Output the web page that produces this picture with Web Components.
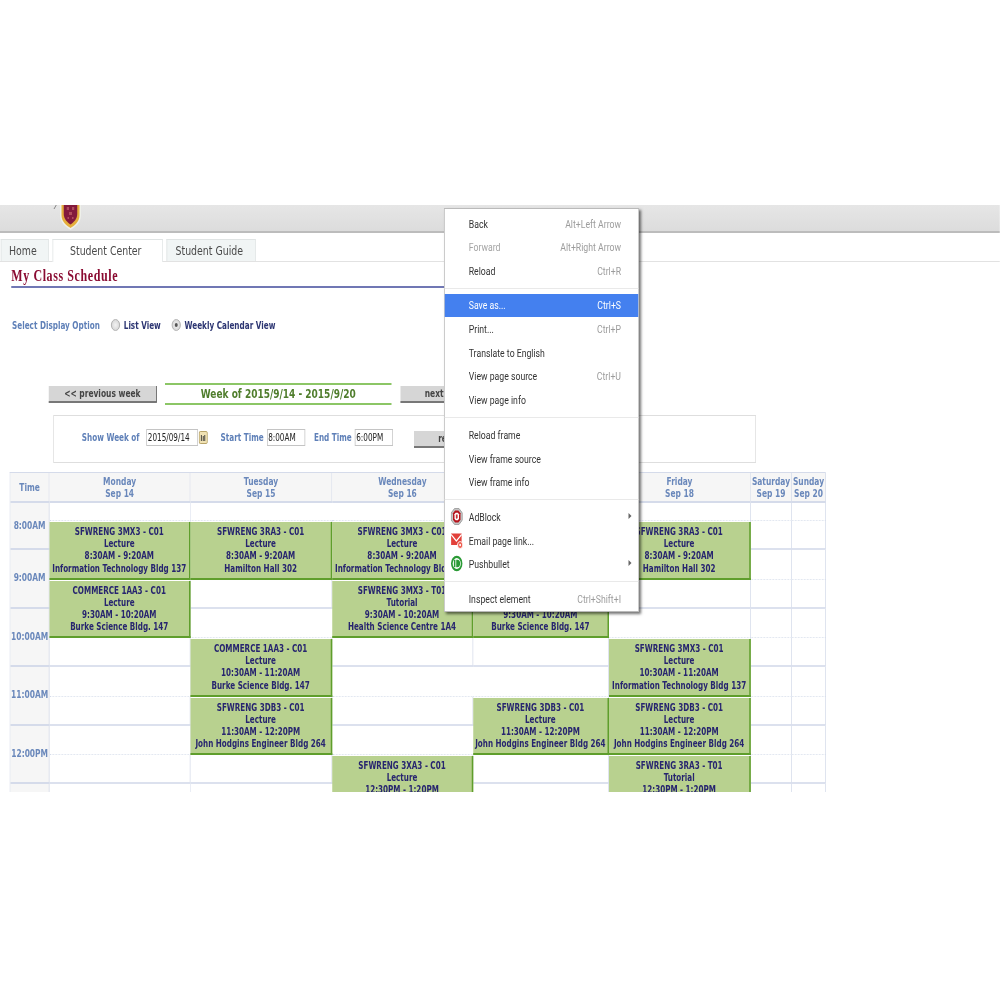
<!DOCTYPE html>
<html lang="en">
<head>
<meta charset="utf-8">
<title>My Class Schedule</title>
<style>
  html, body { margin: 0; background: #fff; }
  body { padding-top: 205px; font-family: "DejaVu Sans", Verdana, sans-serif; }
</style>
</head>
<body>

<class-portal>
  <portal-banner></portal-banner>
  <portal-tabs></portal-tabs>
  <schedule-heading>My Class Schedule</schedule-heading>
  <view-options></view-options>
  <week-nav></week-nav>
  <week-filter></week-filter>
  <schedule-grid>
    <schedule-event day="1" row="3" course="SFWRENG 3MX3 - C01" kind="Lecture" time="8:30AM - 9:20AM" place="Information Technology Bldg 137"></schedule-event>
    <schedule-event day="2" row="3" course="SFWRENG 3RA3 - C01" kind="Lecture" time="8:30AM - 9:20AM" place="Hamilton Hall 302"></schedule-event>
    <schedule-event day="3" row="3" course="SFWRENG 3MX3 - C01" kind="Lecture" time="8:30AM - 9:20AM" place="Information Technology Bldg 137"></schedule-event>
    <schedule-event day="5" row="3" course="SFWRENG 3RA3 - C01" kind="Lecture" time="8:30AM - 9:20AM" place="Hamilton Hall 302"></schedule-event>
    <schedule-event day="1" row="5" course="COMMERCE 1AA3 - C01" kind="Lecture" time="9:30AM - 10:20AM" place="Burke Science Bldg. 147"></schedule-event>
    <schedule-event day="3" row="5" course="SFWRENG 3MX3 - T01" kind="Tutorial" time="9:30AM - 10:20AM" place="Health Science Centre 1A4"></schedule-event>
    <schedule-event day="4" row="5" course="&#160;" kind="&#160;" time="9:30AM - 10:20AM" place="Burke Science Bldg. 147"></schedule-event>
    <schedule-event day="2" row="7" course="COMMERCE 1AA3 - C01" kind="Lecture" time="10:30AM - 11:20AM" place="Burke Science Bldg. 147"></schedule-event>
    <schedule-event day="5" row="7" course="SFWRENG 3MX3 - C01" kind="Lecture" time="10:30AM - 11:20AM" place="Information Technology Bldg 137"></schedule-event>
    <schedule-event day="2" row="9" course="SFWRENG 3DB3 - C01" kind="Lecture" time="11:30AM - 12:20PM" place="John Hodgins Engineer Bldg 264"></schedule-event>
    <schedule-event day="4" row="9" course="SFWRENG 3DB3 - C01" kind="Lecture" time="11:30AM - 12:20PM" place="John Hodgins Engineer Bldg 264"></schedule-event>
    <schedule-event day="5" row="9" course="SFWRENG 3DB3 - C01" kind="Lecture" time="11:30AM - 12:20PM" place="John Hodgins Engineer Bldg 264"></schedule-event>
    <schedule-event day="3" row="11" course="SFWRENG 3XA3 - C01" kind="Lecture" time="12:30PM - 1:20PM"></schedule-event>
    <schedule-event day="5" row="11" course="SFWRENG 3RA3 - T01" kind="Tutorial" time="12:30PM - 1:20PM"></schedule-event>
  </schedule-grid>
  <context-menu>
    <menu-item>Back<span slot="key">Alt+Left Arrow</span></menu-item>
    <menu-item disabled>Forward<span slot="key">Alt+Right Arrow</span></menu-item>
    <menu-item>Reload<span slot="key">Ctrl+R</span></menu-item>
    <menu-line style="height:10.800px"></menu-line>
    <menu-item active>Save as...<span slot="key">Ctrl+S</span></menu-item>
    <menu-item>Print...<span slot="key">Ctrl+P</span></menu-item>
    <menu-item>Translate to English</menu-item>
    <menu-item>View page source<span slot="key">Ctrl+U</span></menu-item>
    <menu-item>View page info</menu-item>
    <menu-line style="height:11.600px"></menu-line>
    <menu-item>Reload frame</menu-item>
    <menu-item>View frame source</menu-item>
    <menu-item>View frame info</menu-item>
    <menu-line></menu-line>
    <menu-item arrow>AdBlock
      <svg slot="icon" viewBox="0 0 16 17" width="16" height="17">
        <path d="M5 .5h6L15.500 5v7L11 16.500H5L.5 12V5z" fill="#c4c4c4" stroke="#9a9a9a"/>
        <path d="M5.800 2.500h4.400L13 5.300v6.400L10.200 14.500H5.800L3 11.700V5.300z" fill="#b5121b"/>
        <path d="M6.500 4.800h3L11 6.300v4.400L9.500 12.200h-3L5 10.700V6.300z" fill="#fff"/>
        <path d="M6.800 6.500h2.400v3.500L8 11 6.800 10z" fill="#c8343a"/>
      </svg></menu-item>
    <menu-item>Email page link...
      <svg slot="icon" viewBox="0 0 16 17" width="16" height="17">
        <path d="M.5 1.500h14v11.500H.5z" fill="#e2403a"/>
        <path d="M.5 2.500 7.500 9l7-6.500" fill="none" stroke="#fff" stroke-width="1.500"/>
        <circle cx="12.500" cy="13" r="3.500" fill="#ef5a4c" stroke="#fff"/>
        <circle cx="12.500" cy="13" r="1.200" fill="#fff"/>
      </svg></menu-item>
    <menu-item arrow>Pushbullet
      <svg slot="icon" viewBox="0 0 16 17" width="16" height="17">
        <circle cx="8" cy="8.500" r="7.700" fill="#2a9a35"/>
        <circle cx="8" cy="8.500" r="5.400" fill="#fff"/>
        <rect x="4.200" y="4.800" width="2" height="7.400" fill="#2a9a35"/>
        <path d="M7.300 4.800h1.500a3.700 3.700 0 0 1 0 7.400H7.300z" fill="#2a9a35"/>
      </svg></menu-item>
    <menu-line></menu-line>
    <menu-item>Inspect element<span slot="key">Ctrl+Shift+I</span></menu-item>
  </context-menu>
</class-portal>

<script>
// the reference is a screenshot squeezed sideways to 3/4, so the sheet is laid out
// at its own width and scaled once here (all x values below are reference x * 4/3)
class ClassPortal extends HTMLElement {
  constructor() {
    super();
    this.attachShadow({ mode: 'open' });
    this.shadowRoot.innerHTML = `
      <style>
        :host {
          display: block;
          width: 1000px;
          height: 587px;
          overflow: hidden;
          background: #fff;
          font-family: "DejaVu Sans", Verdana, sans-serif;
        }
        .sheet {
          position: relative;
          width: 1333px;
          height: 587px;
          transform: scaleX(.75);
          transform-origin: 0 0;
          filter: blur(.5px);
        }
      </style>
      <div class="sheet"><slot></slot></div>`;
  }
}
customElements.define('class-portal', ClassPortal);

class PortalBanner extends HTMLElement {
  constructor() {
    super();
    this.attachShadow({ mode: 'open' });
    this.shadowRoot.innerHTML = `
      <style>
        :host {
          display: flex;
          box-sizing: border-box;
          height: 28px;
          padding-left: 70px;
          gap: 4px;
          background: linear-gradient(#e6e6e6, #dcdcdc);
          border-bottom: 2px solid #bcbcbc;
        }
        svg { display: block; }
      </style>
      <svg width="6" height="5" viewBox="0 0 6 5"><path d="M5 0 2 4" stroke="#777" fill="none"/></svg>
      <svg width="28" height="25" viewBox="0 0 28 25">
        <path d="M0 0H28V10C28 18 20 22 14 25C8 22 0 18 0 10Z" fill="#eef0ea"/>
        <path d="M2 0H26V10C26 17 19 20.500 14 23C9 20.500 2 17 2 10Z" fill="#e5ae3c"/>
        <path d="M5 0H23V9C23 14 18 17.500 14 19.500C10 17.500 5 14 5 9Z" fill="#83193c"/>
        <path d="M9 2h3v3H9zM16 2h3v3h-3zM12 7h4v3h-4zM10 12h2v2h-2zM16 12h2v2h-2z" fill="#b04a5c"/>
      </svg>`;
  }
}
customElements.define('portal-banner', PortalBanner);

class PortalTabs extends HTMLElement {
  constructor() {
    super();
    this.attachShadow({ mode: 'open' });
    this.shadowRoot.innerHTML = `
      <style>
        :host {
          display: flex;
          box-sizing: border-box;
          height: 23px;
          margin-top: 6px;
          padding-left: 1px;
          gap: 5px;
          border-bottom: 1px solid #e2e2e2;
          font-size: 12.500px;
          color: #4a4a4a;
        }
        div {
          box-sizing: border-box;
          height: 22px;
          padding: 0 5px 1px 0;
          display: flex;
          align-items: center;
          justify-content: center;
          background: #f1f5f5;
          border: 1px solid #e0e4e4;
          border-bottom: 0;
        }
        .on { background: #fff; height: 23px; padding-bottom: 2px; }
      </style>
      <div style="width:64px">Home</div>
      <div class="on" style="width:147px">Student Center</div>
      <div style="width:119px">Student Guide</div>`;
  }
}
customElements.define('portal-tabs', PortalTabs);

class ScheduleHeading extends HTMLElement {
  constructor() {
    super();
    this.attachShadow({ mode: 'open' });
    this.shadowRoot.innerHTML = `
      <style>
        :host {
          display: block;
          box-sizing: border-box;
          width: 660px;
          height: 26px;
          margin-left: 15px;
          padding-top: 4px;
          border-bottom: 2px solid #7077b4;
          font: bold 16px/20px "Liberation Serif", serif;
          letter-spacing: .8px;
          color: #8a0b32;
        }
      </style>
      <slot></slot>`;
  }
}
customElements.define('schedule-heading', ScheduleHeading);

class ViewOptions extends HTMLElement {
  constructor() {
    super();
    this.attachShadow({ mode: 'open' });
    this.shadowRoot.innerHTML = `
      <style>
        :host {
          display: flex;
          align-items: center;
          height: 16px;
          margin: 29px 0 0 16px;
          font-size: 9.700px;
          font-weight: bold;
          color: #2c3572;
        }
        .lead { color: #5f80b8; width: 132px; }
        i {
          box-sizing: border-box;
          display: flex;
          align-items: center;
          justify-content: center;
          width: 12px;
          height: 12px;
          margin-right: 5px;
          border-radius: 50%;
          border: 1px solid #a8a8a8;
          background: radial-gradient(#f2f2f2, #cfcfcf);
        }
        i.on::after { content: ""; width: 4px; height: 4px; border-radius: 50%; background: #555; }
        .list { width: 64px; }
      </style>
      <span class="lead">Select Display Option</span>
      <i></i><span class="list">List View</span>
      <i class="on"></i><span>Weekly Calendar View</span>`;
  }
}
customElements.define('view-options', ViewOptions);

class WeekNav extends HTMLElement {
  constructor() {
    super();
    this.attachShadow({ mode: 'open' });
    this.shadowRoot.innerHTML = `
      <style>
        :host {
          display: flex;
          align-items: center;
          height: 22px;
          margin: 50px 0 0 65px;
        }
        .btn {
          box-sizing: border-box;
          width: 144px;
          height: 17px;
          display: flex;
          align-items: center;
          justify-content: center;
          background: #d6d6d6;
          border-right: 1px solid #555;
          border-bottom: 2px solid #777;
          font-size: 10px;
          font-weight: bold;
          color: #444;
        }
        .week {
          box-sizing: border-box;
          width: 302px;
          height: 22px;
          margin: 0 12px 0 11px;
          display: flex;
          align-items: center;
          justify-content: center;
          border-top: 2px solid #8cc666;
          border-bottom: 2px solid #8cc666;
          font-size: 12px;
          font-weight: bold;
          color: #4f7d2c;
        }
      </style>
      <div class="btn">&lt;&lt; previous week</div>
      <div class="week">Week of 2015/9/14 - 2015/9/20</div>
      <div class="btn">next week &gt;&gt;</div>`;
  }
}
customElements.define('week-nav', WeekNav);

class WeekFilter extends HTMLElement {
  constructor() {
    super();
    this.attachShadow({ mode: 'open' });
    this.shadowRoot.innerHTML = `
      <style>
        :host {
          box-sizing: border-box;
          display: flex;
          align-items: center;
          width: 937px;
          height: 48px;
          margin: 10px 0 0 71px;
          padding: 0 0 4px 37px;
          border: 1px solid #dedede;
          font-size: 9.700px;
          font-weight: bold;
          color: #5f80b8;
        }
        .box {
          box-sizing: border-box;
          height: 17px;
          margin-left: 9px;
          padding-left: 1px;
          display: flex;
          align-items: center;
          border: 1px solid #c4c4c4;
          font-weight: normal;
          color: #222;
        }
        svg { display: block; margin: 0 17px 0 1px; }
        .btn {
          box-sizing: border-box;
          width: 104px;
          height: 17px;
          margin: 4px 0 0 28px;
          display: flex;
          align-items: center;
          justify-content: center;
          background: #d6d6d6;
          border-bottom: 2px solid #777;
          color: #444;
        }
      </style>
      <span>Show Week of</span><div class="box" style="width:69px">2015/09/14</div>
      <svg width="12" height="13" viewBox="0 0 12 13">
        <rect x=".5" y=".5" width="11" height="12" rx="1.500" fill="#f0e2b4" stroke="#b09a5a"/>
        <path d="M3.500 4v6M8 4v6M6 5v5" stroke="#333"/>
      </svg>
      <span>Start Time</span><div class="box" style="width:51px;margin-left:4px">8:00AM</div>
      <span style="margin-left:12px">End Time</span><div class="box" style="width:51px;margin-left:4px">6:00PM</div>
      <div class="btn">refresh</div>`;
  }
}
customElements.define('week-filter', WeekFilter);

class ScheduleGrid extends HTMLElement {
  constructor() {
    super();
    this.attachShadow({ mode: 'open' });
    // thursday's heading sits behind the context menu
    const days = [['Monday', 'Sep 14'], ['Tuesday', 'Sep 15'], ['Wednesday', 'Sep 16'], ['', ''],
                  ['Friday', 'Sep 18'], ['Saturday', 'Sep 19'], ['Sunday', 'Sep 20']];
    const hours = ['8:00AM', '9:00AM', '10:00AM', '11:00AM', '12:00PM'];
    let cells = `<div class="head" style="grid-area:1/1">Time</div>`;
    days.forEach((d, i) => {
      cells += `<div class="head" style="grid-area:1/${i + 2}"><span>${d[0]}<br>${d[1]}</span></div>`;
    });
    hours.forEach((h, i) => {
      cells += `<div class="time" style="grid-area:${2 + i * 2}/1/span 2">${h}</div>`;
    });
    cells += `<div class="time" style="grid-area:12/1/span 2"></div>`;
    for (let c = 2; c <= 8; c++) {
      for (let r = 2; r <= 13; r++) {
        // hour lines are solid, half hour lines only dotted
        cells += `<div class="cell ${r % 2 ? 'hour' : 'half'}" style="grid-area:${r}/${c}"></div>`;
      }
    }
    this.shadowRoot.innerHTML = `
      <style>
        :host {
          display: grid;
          width: max-content;
          margin: 9px 0 0 13px;
          grid-template-columns: 52px 188px 189px 188px 181px 189px 55px 45px;
          grid-template-rows: 30px 18px repeat(11, 29.25px);
          border-top: 1px solid #d5dbea;
          border-left: 1px solid #d5dbea;
          color: #6a88bb;
          font-size: 10px;
          font-weight: bold;
        }
        div { box-sizing: border-box; }
        .head, .time {
          display: flex;
          align-items: center;
          justify-content: center;
          text-align: center;
          line-height: 12.200px;
          background: #f6f6f6;
          border-right: 1px solid #d5dbea;
          border-bottom: 2px solid #d5dbea;
        }
        .head { padding-top: 2px; }
        .head span { white-space: nowrap; }
        .cell { border-right: 1px solid #d5dbea; }
        .hour { border-bottom: 2px solid #dce1ee; }
        .half { border-bottom: 1px dotted #d5dbea; }
      </style>
      ${cells}
      <slot></slot>`;
  }
}
customElements.define('schedule-grid', ScheduleGrid);

class ScheduleEvent extends HTMLElement {
  constructor() {
    super();
    this.attachShadow({ mode: 'open' });
  }
  connectedCallback() {
    const lines = ['course', 'kind', 'time', 'place']
      .map(n => this.getAttribute(n))
      .filter(Boolean)
      .map(t => `<span>${t}</span>`)
      .join('');
    this.style.gridArea = `${this.getAttribute('row')} / ${+this.getAttribute('day') + 1} / span 2`;
    this.shadowRoot.innerHTML = `
      <style>
        :host {
          box-sizing: border-box;
          display: flex;
          flex-direction: column;
          justify-content: flex-start;
          align-items: center;
          z-index: 1;
          margin-top: 1px;
          padding-top: 4px;
          background: #b8d18f;
          border-right: 2px solid #5f9e2c;
          border-bottom: 2px solid #5f9e2c;
          font-size: 9.600px;
          font-weight: bold;
          line-height: 12.200px;
          color: #27256f;
          white-space: nowrap;
        }
      </style>
      ${lines}`;
  }
}
customElements.define('schedule-event', ScheduleEvent);

class ContextMenu extends HTMLElement {
  constructor() {
    super();
    this.attachShadow({ mode: 'open' });
    this.shadowRoot.innerHTML = `
      <style>
        :host {
          box-sizing: border-box;
          position: absolute;
          z-index: 5;
          left: 592px;
          top: 3px;
          width: 260px;
          height: 404px;
          padding-top: 3px;
          display: block;
          background: #fff;
          border: 1px solid #bababa;
          box-shadow: 2px 2px 3px rgba(0,0,0,.55);
          font-family: Roboto, sans-serif;
          font-size: 11.600px;
        }
      </style>
      <slot></slot>`;
  }
}
customElements.define('context-menu', ContextMenu);

class MenuItem extends HTMLElement {
  constructor() {
    super();
    this.attachShadow({ mode: 'open' });
    this.shadowRoot.innerHTML = `
      <style>
        :host {
          position: relative;
          box-sizing: border-box;
          display: flex;
          align-items: center;
          justify-content: space-between;
          height: 23.600px;
          padding: 0 23px 0 32px;
          color: #333;
        }
        :host([disabled]) { color: #a4a4a4; }
        :host([active]) { background: #4480ef; color: #fff; }
        ::slotted([slot=key]) { color: #9c9c9c; }
        :host([active]) ::slotted([slot=key]) { color: #fff; }
        ::slotted(svg) { position: absolute; left: 8px; top: 3px; }
        .arrow { display: none; width: 0; height: 0; position: absolute; right: 9px; top: 8px;
                 border-left: 4px solid #666; border-top: 3.500px solid transparent; border-bottom: 3.500px solid transparent; }
        :host([arrow]) .arrow { display: block; }
      </style>
      <span><slot></slot></span>
      <slot name="key"></slot>
      <slot name="icon"></slot>
      <i class="arrow"></i>`;
  }
}
customElements.define('menu-item', MenuItem);

class MenuLine extends HTMLElement {
  constructor() {
    super();
    this.attachShadow({ mode: 'open' });
    this.shadowRoot.innerHTML = `
      <style>
        :host { display: flex; align-items: center; height: 11.200px; }
        div { width: 100%; height: 1px; background: #e9e9e9; }
      </style>
      <div></div>`;
  }
}
customElements.define('menu-line', MenuLine);
</script>
</body>
</html>
